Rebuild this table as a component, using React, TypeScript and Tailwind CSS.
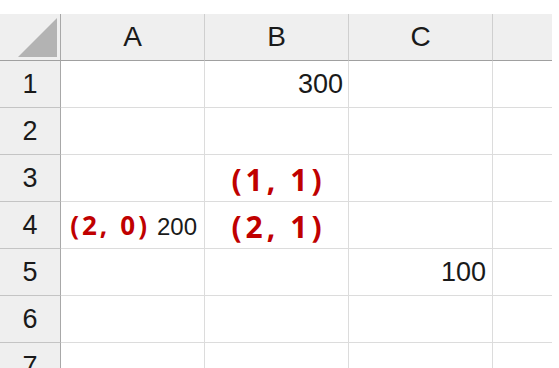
import React from 'react';

const cols = ['A', 'B', 'C', ''];
const rows = [1, 2, 3, 4, 5, 6, 7];

// red bold pair such as "(1, 1)", comma followed by a wide gap
const Red: React.FC<{ a: string; b: string; size: 'lg' | 'sm' }> = ({ a, b, size }) => (
  <span
    className={
      size === 'lg'
        ? "font-['Open_Sans',sans-serif] font-bold text-[#c00000] text-[30px] tracking-[4px] leading-none whitespace-nowrap"
        : "font-['Open_Sans',sans-serif] font-bold text-[#c00000] text-[26px] tracking-[3px] leading-none whitespace-nowrap"
    }
  >
    ({a},<span className={size === 'lg' ? 'ml-[11px]' : 'ml-[10px]'}>{b})</span>
  </span>
);

const cellContent = (r: number, c: number): React.ReactNode => {
  if (r === 1 && c === 1) return <span className="ml-auto pr-[5px]">300</span>;
  if (r === 3 && c === 1)
    return (
      <span className="mx-auto pl-[4px] pt-[8px]">
        <Red a="1" b="1" size="lg" />
      </span>
    );
  if (r === 4 && c === 0)
    return (
      <span className="ml-auto pr-[7px] pt-[4px] flex items-baseline gap-[7px] text-[24px]">
        <Red a="2" b="0" size="sm" />
        <span>200</span>
      </span>
    );
  if (r === 4 && c === 1)
    return (
      <span className="mx-auto pl-[4px] pt-[8px]">
        <Red a="2" b="1" size="lg" />
      </span>
    );
  if (r === 5 && c === 2) return <span className="ml-auto pr-[6px]">100</span>;
  return null;
};

const App: React.FC = () => {
  return (
    <div className="w-[559px] h-[368px] bg-white overflow-hidden pt-[14px] font-['Liberation_Sans',sans-serif] text-[#1a1a1a]">
      <div className="grid w-[552px] grid-cols-[61px_144px_144px_144px_59px] auto-rows-[47px]">
        {/* corner */}
        <div className="bg-[#efefef] border-r border-b border-r-[#a8a8a8] border-b-[#a0a0a0] flex items-end justify-end">
          <svg width="40" height="40" viewBox="0 0 40 40" className="mb-[2px] mr-[2px]">
            <polygon points="39,0 39,39 0,39" fill="#b3b3b3" />
          </svg>
        </div>
        {cols.map((c, i) => (
          <div
            key={c + i}
            className={
              i === cols.length - 1
                ? 'bg-[#efefef] border-b border-b-[#a0a0a0]'
                : 'bg-[#efefef] border-r border-b border-r-[#cfcfcf] border-b-[#a0a0a0] flex items-center justify-center text-[28px]'
            }
          >
            {c}
          </div>
        ))}

        {rows.map((r) => (
          <React.Fragment key={r}>
            <div className="bg-[#efefef] border-r border-b border-r-[#a8a8a8] border-b-[#c4c4c4] flex items-center justify-center text-[27px]">
              {r}
            </div>
            {[0, 1, 2, 3].map((c) => (
              <div
                key={c}
                className={
                  c === 3
                    ? 'border-b border-[#dcdcdc]'
                    : 'border-r border-b border-[#dcdcdc] flex items-center text-[27px]'
                }
              >
                {cellContent(r, c)}
              </div>
            ))}
          </React.Fragment>
        ))}
      </div>
    </div>
  );
};

export default App;
